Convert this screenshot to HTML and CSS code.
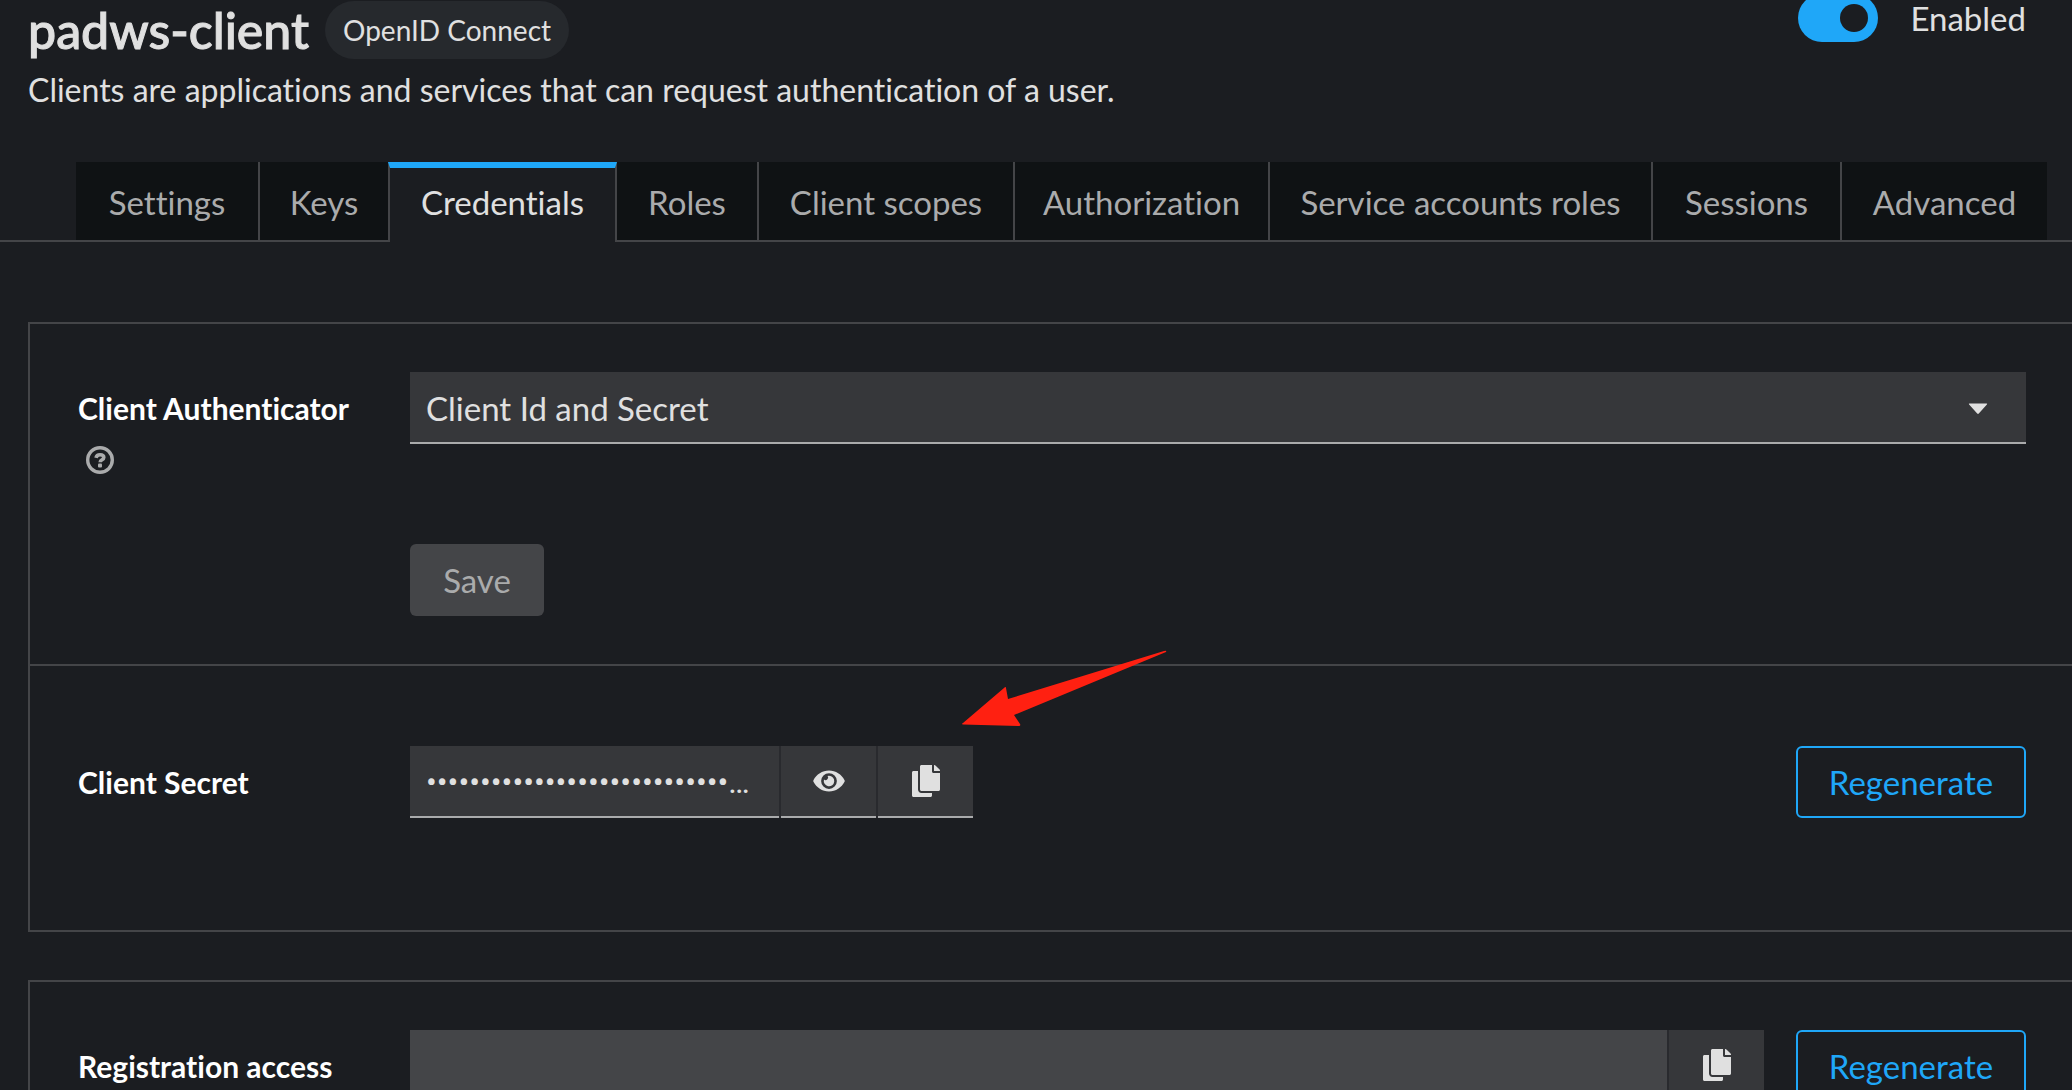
FILE: index.html
```html
<!DOCTYPE html>
<html lang="en">
<head>
    <meta charset="utf-8">
    <title>Client details</title>
    <link rel="stylesheet" href="styles.css">
</head>
<body>
    <header class="page-header">
        <div class="title-row">
            <h1>padws-client</h1>
            <span class="badge">OpenID Connect</span>
            <label class="switch" for="enabled">
                <input type="checkbox" id="enabled" checked>
                <span>Enabled</span>
            </label>
        </div>
        <p class="description">Clients are applications and services that can request authentication of a user.</p>
    </header>

    <nav class="tabs">
        <a href="#settings">Settings</a>
        <a href="#keys">Keys</a>
        <a href="#credentials" class="active">Credentials</a>
        <a href="#roles">Roles</a>
        <a href="#scopes">Client scopes</a>
        <a href="#authorization">Authorization</a>
        <a href="#service">Service accounts roles</a>
        <a href="#sessions">Sessions</a>
        <a href="#advanced">Advanced</a>
    </nav>

    <main>
        <form class="card">
            <section class="panel">
                <div class="row">
                    <div class="label">
                        <label for="authenticator">Client Authenticator</label>
                        <button type="button" class="help" aria-label="Help">
                            <svg viewBox="0 0 28 28" width="28" height="28">
                                <circle cx="14" cy="14" r="12.300" fill="none" stroke="currentColor" stroke-width="3.400"/>
                                <path d="M10 11.800C10.500 9.600 12 8.800 14 8.800c2.200 0 3.800 1 3.800 2.800 0 2.300-3.600 2.200-3.600 4.600" fill="none" stroke="currentColor" stroke-width="3.600"/>
                                <rect x="12" y="17.600" width="4" height="3.800" rx="1" fill="currentColor"/>
                            </svg>
                        </button>
                    </div>
                    <div class="select">
                        <select id="authenticator">
                            <option>Client Id and Secret</option>
                        </select>
                        <svg class="caret" viewBox="0 0 20 12" width="20" height="12"><path d="M1.5 0.5h17q1.2 0 .4 1L10.8 10.5q-.8.9-1.6 0L1.1 1.5q-.8-1 .4-1z"/></svg>
                    </div>
                </div>
                <button type="button" class="save" disabled>Save</button>
            </section>

            <section class="panel secret">
                <div class="row">
                    <div class="label"><label for="secret">Client Secret</label></div>
                    <div class="group short">
                        <input type="password" id="secret" value="aaaaaaaaaaaaaaaaaaaaaaaaaaaaaaaa" readonly>
                        <button type="button" aria-label="Show secret">
                            <svg viewBox="0 0 576 512" width="32" height="28"><path d="M572.5 241.400C518.300 135.600 410.900 64 288 64S57.700 135.600 3.500 241.400a32.400 32.400 0 0 0 0 29.200C57.700 376.400 165.100 448 288 448s230.300-71.600 284.500-177.400a32.400 32.400 0 0 0 0-29.200zM288 400a144 144 0 1 1 144-144 143.900 143.900 0 0 1-144 144zm0-240a95.300 95.300 0 0 0-25.300 3.800 47.900 47.900 0 0 1-66.900 66.900A95.800 95.800 0 1 0 288 160z"/></svg>
                        </button>
                        <button type="button" aria-label="Copy secret">
                            <svg viewBox="0 0 448 512" width="28" height="32"><path d="M320 448v40c0 13.300-10.700 24-24 24H24c-13.300 0-24-10.700-24-24V120c0-13.300 10.700-24 24-24h72v296c0 30.900 25.100 56 56 56h168zm0-344V0H152c-13.300 0-24 10.700-24 24v368c0 13.300 10.700 24 24 24h272c13.300 0 24-10.700 24-24V128H344c-13.200 0-24-10.800-24-24zm121-31L375 7A24 24 0 0 0 358 0H352v96h96v-6.100a24 24 0 0 0-7-16.900z"/></svg>
                        </button>
                    </div>
                    <button type="button" class="regenerate">Regenerate</button>
                </div>
                <svg class="arrow" viewBox="0 0 206 78" width="206" height="78"><path d="M1 73L42 38q2-2 2 0L46 49 202 1q3-1 2 1L52 65 58 74q1 2-1 2L1 74.500q-2-.5 0-1.500z"/></svg>
            </section>
        </form>

        <form class="card">
            <section class="panel">
                <div class="row">
                    <div class="label"><label for="token">Registration access</label></div>
                    <div class="group">
                        <input type="text" id="token" disabled>
                        <button type="button" aria-label="Copy token">
                            <svg viewBox="0 0 448 512" width="28" height="32"><path d="M320 448v40c0 13.300-10.700 24-24 24H24c-13.300 0-24-10.700-24-24V120c0-13.300 10.700-24 24-24h72v296c0 30.900 25.100 56 56 56h168zm0-344V0H152c-13.300 0-24 10.700-24 24v368c0 13.300 10.700 24 24 24h272c13.300 0 24-10.700 24-24V128H344c-13.200 0-24-10.800-24-24zm121-31L375 7A24 24 0 0 0 358 0H352v96h96v-6.100a24 24 0 0 0-7-16.900z"/></svg>
                        </button>
                    </div>
                    <button type="button" class="regenerate">Regenerate</button>
                </div>
            </section>
        </form>
    </main>
</body>
</html>
```
FILE: styles.css
```css
* {
    box-sizing: border-box;
}

html {
    background-color: #1b1d21;
}

body {
    margin: 0;
    height: 100vh;
    overflow: hidden;
    color: #e0e0e0;
    font-family: Lato, sans-serif;
    font-size: 33px;
    font-variant-ligatures: none;
    line-height: 48px;
}

button,
input,
select {
    margin: 0;
    font: inherit;
    font-variant-ligatures: none;
}

/* header */
.page-header {
    padding: 0 46px 0 28px;
}

.title-row {
    display: flex;
    align-items: flex-start;
    height: 60px;
}

h1 {
    margin: 0;
    font-size: 50px;
    font-weight: 500;
    line-height: 60px;
    -webkit-text-stroke: 1px #e0e0e0;
}

.badge {
    margin: 1px 0 0 16px;
    padding: 0 18px;
    border-radius: 30px;
    background-color: #26292d;
    font-size: 28px;
    line-height: 58px;
}

.switch {
    display: flex;
    align-items: center;
    gap: 32px;
    margin: -6px 0 0 auto;
}

.switch input {
    appearance: none;
    width: 80px;
    height: 48px;
    padding: 10px;
    border-radius: 24px;
    background-color: #1fa7f8;
}

.switch input::before {
    content: "";
    display: block;
    width: 28px;
    height: 28px;
    margin-left: auto;
    border-radius: 50%;
    background-color: #1b1d21;
}

.description {
    margin: 6px 0 0;
    font-size: 32px;
}

/* tabs */
.tabs {
    display: grid;
    grid-template-columns: 184fr 130fr 227fr 142fr 256fr 255fr 383fr 189fr 205fr;
    height: 80px;
    margin-top: 48px;
    padding: 0 25px 0 76px;
    border-bottom: 2px solid #444548;
}

.tabs a {
    padding-top: 2px;
    border-right: 2px solid #444548;
    background-color: #0f1214;
    color: #aaabac;
    line-height: 76px;
    text-align: center;
    text-decoration: none;
    white-space: nowrap;
}

.tabs a:last-child {
    border-right: none;
}

.tabs .active {
    margin: 0 0 -2px -2px;
    padding-top: 0;
    border-top: 6px solid #1fa7f8;
    border-left: 2px solid #444548;
    background-color: #1b1d21;
    color: #e0e0e0;
    line-height: 68px;
}

/* cards */
main {
    padding: 80px 0 0 28px;
}

.card {
    margin-bottom: 48px;
    border: 2px solid #444548;
    border-right: none;
}

.panel {
    padding: 48px 46px 48px 48px;
}

.secret {
    position: relative;
    padding-top: 80px;
    padding-bottom: 112px;
    border-top: 2px solid #444548;
}

.row {
    display: flex;
    align-items: flex-start;
    gap: 32px;
}

.label {
    flex: 0 0 300px;
    padding-top: 12px;
    color: #fff;
    font-size: 30px;
    font-weight: bold;
}

.help {
    display: block;
    height: 28px;
    margin: 14px 0 0 8px;
    padding: 0;
    border: none;
    background: none;
    color: #aaabac;
}

.help svg,
.group svg {
    display: block;
}

/* controls */
.select {
    position: relative;
    flex: 1;
}

select {
    appearance: none;
    display: block;
    width: 100%;
    height: 72px;
    padding: 2px 16px 0;
    border: none;
    border-bottom: 2px solid #aaabac;
    border-radius: 0;
    background-color: #36373a;
    color: #e0e0e0;
}

.caret {
    position: absolute;
    top: 31px;
    right: 38px;
    fill: #e0e0e0;
}

.save {
    display: block;
    width: 134px;
    height: 72px;
    margin: 70px 0 0 332px;
    padding: 0;
    border: none;
    border-radius: 6px;
    background-color: #444548;
    color: #aaabac;
}

.group {
    display: flex;
    flex: 1;
    gap: 2px;
    min-width: 0;
    background-color: #292a2e;
}

.group.short {
    flex: 0 1 563px;
}

.group input {
    flex: 1;
    min-width: 0;
    height: 72px;
    padding: 2px 28px 0 16px;
    border: none;
    border-bottom: 2px solid #aaabac;
    border-radius: 0;
    background-color: #36373a;
    color: #e0e0e0;
    font-family: Roboto, sans-serif;
    font-size: 32px;
    text-overflow: ellipsis;
}

.group input:disabled {
    border-bottom-color: #444548;
    background-color: #444548;
}

.group button {
    display: flex;
    align-items: center;
    justify-content: center;
    width: 95px;
    height: 72px;
    padding: 0;
    border: none;
    border-bottom: 2px solid #aaabac;
    background-color: #36373a;
}

.group svg {
    fill: #e0e0e0;
}

.regenerate {
    width: 230px;
    height: 72px;
    margin-left: auto;
    padding: 0;
    border: 2px solid #1fa7f8;
    border-radius: 6px;
    background: none;
    color: #1fa7f8;
}

.arrow {
    position: absolute;
    top: -16px;
    left: 932px;
    fill: #ff2011;
}
```
